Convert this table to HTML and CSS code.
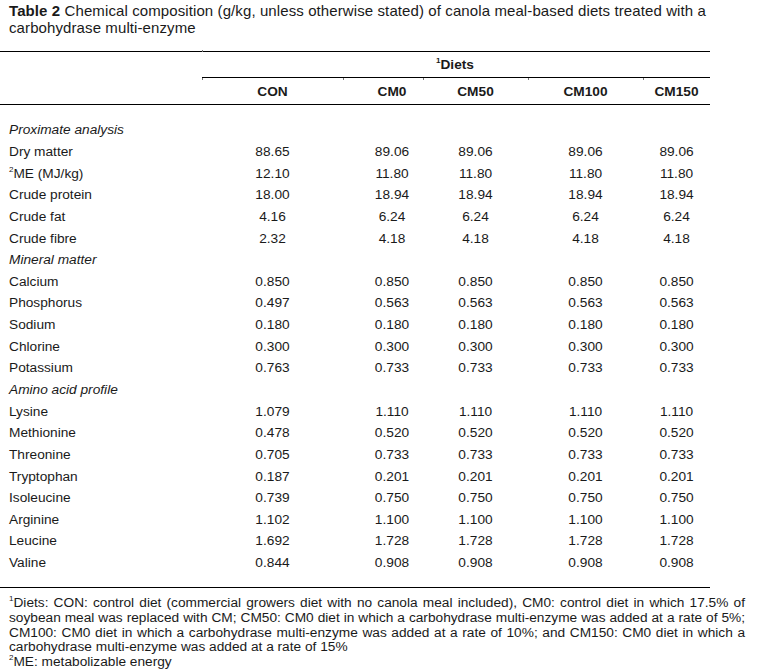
FILE: index.html
```html
<!DOCTYPE html>
<html>
<head>
<meta charset="utf-8">
<link rel="stylesheet" href="styles.css">
</head>
<body>
<p class="caption"><b>Table 2</b> Chemical composition (g/kg, unless otherwise stated) of canola meal-based diets treated with a carbohydrase multi-enzyme</p>
<table class="tbl">
  <colgroup>
    <col class="c-label"><col class="c-con"><col class="c-cm0"><col class="c-cm50"><col class="c-cm100"><col class="c-cm150">
  </colgroup>
  <thead>
    <tr class="h1">
      <th></th>
      <th colspan="5" class="diets tick-top"><sup>1</sup>Diets</th>
    </tr>
    <tr class="h2">
      <th></th>
      <th class="tick">CON</th>
      <th class="shift tick">CM0</th>
      <th class="tick">CM50</th>
      <th class="tick">CM100</th>
      <th class="tick">CM150</th>
    </tr>
  </thead>
  <tbody>
    <tr class="first"><td class="sec" colspan="6">Proximate analysis</td></tr>
    <tr><td>Dry matter</td><td>88.65</td><td class="shift">89.06</td><td>89.06</td><td>89.06</td><td>89.06</td></tr>
    <tr><td><sup>2</sup>ME (MJ/kg)</td><td>12.10</td><td class="shift">11.80</td><td>11.80</td><td>11.80</td><td>11.80</td></tr>
    <tr><td>Crude protein</td><td>18.00</td><td class="shift">18.94</td><td>18.94</td><td>18.94</td><td>18.94</td></tr>
    <tr><td>Crude fat</td><td>4.16</td><td class="shift">6.24</td><td>6.24</td><td>6.24</td><td>6.24</td></tr>
    <tr><td>Crude fibre</td><td>2.32</td><td class="shift">4.18</td><td>4.18</td><td>4.18</td><td>4.18</td></tr>
    <tr><td class="sec" colspan="6">Mineral matter</td></tr>
    <tr><td>Calcium</td><td>0.850</td><td class="shift">0.850</td><td>0.850</td><td>0.850</td><td>0.850</td></tr>
    <tr><td>Phosphorus</td><td>0.497</td><td class="shift">0.563</td><td>0.563</td><td>0.563</td><td>0.563</td></tr>
    <tr><td>Sodium</td><td>0.180</td><td class="shift">0.180</td><td>0.180</td><td>0.180</td><td>0.180</td></tr>
    <tr><td>Chlorine</td><td>0.300</td><td class="shift">0.300</td><td>0.300</td><td>0.300</td><td>0.300</td></tr>
    <tr><td>Potassium</td><td>0.763</td><td class="shift">0.733</td><td>0.733</td><td>0.733</td><td>0.733</td></tr>
    <tr><td class="sec" colspan="6">Amino acid profile</td></tr>
    <tr><td>Lysine</td><td>1.079</td><td class="shift">1.110</td><td>1.110</td><td>1.110</td><td>1.110</td></tr>
    <tr><td>Methionine</td><td>0.478</td><td class="shift">0.520</td><td>0.520</td><td>0.520</td><td>0.520</td></tr>
    <tr><td>Threonine</td><td>0.705</td><td class="shift">0.733</td><td>0.733</td><td>0.733</td><td>0.733</td></tr>
    <tr><td>Tryptophan</td><td>0.187</td><td class="shift">0.201</td><td>0.201</td><td>0.201</td><td>0.201</td></tr>
    <tr><td>Isoleucine</td><td>0.739</td><td class="shift">0.750</td><td>0.750</td><td>0.750</td><td>0.750</td></tr>
    <tr><td>Arginine</td><td>1.102</td><td class="shift">1.100</td><td>1.100</td><td>1.100</td><td>1.100</td></tr>
    <tr><td>Leucine</td><td>1.692</td><td class="shift">1.728</td><td>1.728</td><td>1.728</td><td>1.728</td></tr>
    <tr class="last"><td>Valine</td><td>0.844</td><td class="shift">0.908</td><td>0.908</td><td>0.908</td><td>0.908</td></tr>
  </tbody>
</table>
<p class="notes"><sup>1</sup>Diets: CON: control diet (commercial growers diet with no canola meal included), CM0: control diet in which 17.5% of soybean meal was replaced with CM; CM50: CM0 diet in which a carbohydrase multi-enzyme was added at a rate of 5%; CM100: CM0 diet in which a carbohydrase multi-enzyme was added at a rate of 10%; and CM150: CM0 diet in which a carbohydrase multi-enzyme was added at a rate of 15%<br><sup>2</sup>ME: metabolizable energy</p>
</body>
</html>
```
FILE: styles.css
```css
html, body {
  margin: 0;
  padding: 0;
  background: #fff;
}
body {
  font-family: "Liberation Sans", Arial, sans-serif;
  font-size: 13px;
  color: #1a1a1a;
  width: 775px;
  height: 669px;
  overflow: hidden;
}
.caption {
  margin: 0;
  padding: 2px 0 0 9px;
  width: 720px;
  font-size: 15px;
  letter-spacing: 0.1px;
  line-height: 17px;
}
.tbl {
  margin-top: 15px;
  border-collapse: collapse;
  width: 710px;
  table-layout: fixed;
  border-top: 1px solid #000;
  border-bottom: 1px solid #000;
}
.c-label { width: 202px; }
.c-con { width: 141px; }
.c-cm0 { width: 80px; }
.c-cm50 { width: 105px; }
.c-cm100 { width: 115px; }
.c-cm150 { width: 67px; }
.tbl th, .tbl td {
  padding: 0;
  text-align: center;
  font-size: 13.7px;
  white-space: nowrap;
}
.tbl th {
  font-weight: bold;
}
.h1 th {
  height: 25px;
  vertical-align: middle;
}
.h1 .diets {
  border-bottom: 1px solid #000;
  padding-right: 2px;
}
.h2 th {
  height: 26px;
  border-bottom: 1px solid #000;
}
.tick, .tick-top {
  position: relative;
}
.tick::before, .tick-top::before {
  content: "";
  position: absolute;
  left: 0;
  width: 1px;
  height: 2px;
  background: #777;
}
.tick::before {
  top: 0;
}
.tick-top::before {
  top: -2px;
}
.tbl td:first-child {
  text-align: left;
  padding-left: 9px;
}
.tbl td {
  height: 21.65px;
}
.tbl td.sec {
  font-style: italic;
}
.tbl .shift {
  padding-left: 18px;
}
.first td {
  padding-top: 14px;
}
.last td {
  padding-bottom: 14px;
}
sup {
  font-size: 8px;
  line-height: 0;
  vertical-align: 6px;
}
.notes {
  margin: 8px 0 0 0;
  padding-left: 9px;
  width: 736px;
  text-align: justify;
  line-height: 14.6px;
  font-size: 13.7px;
}
```
